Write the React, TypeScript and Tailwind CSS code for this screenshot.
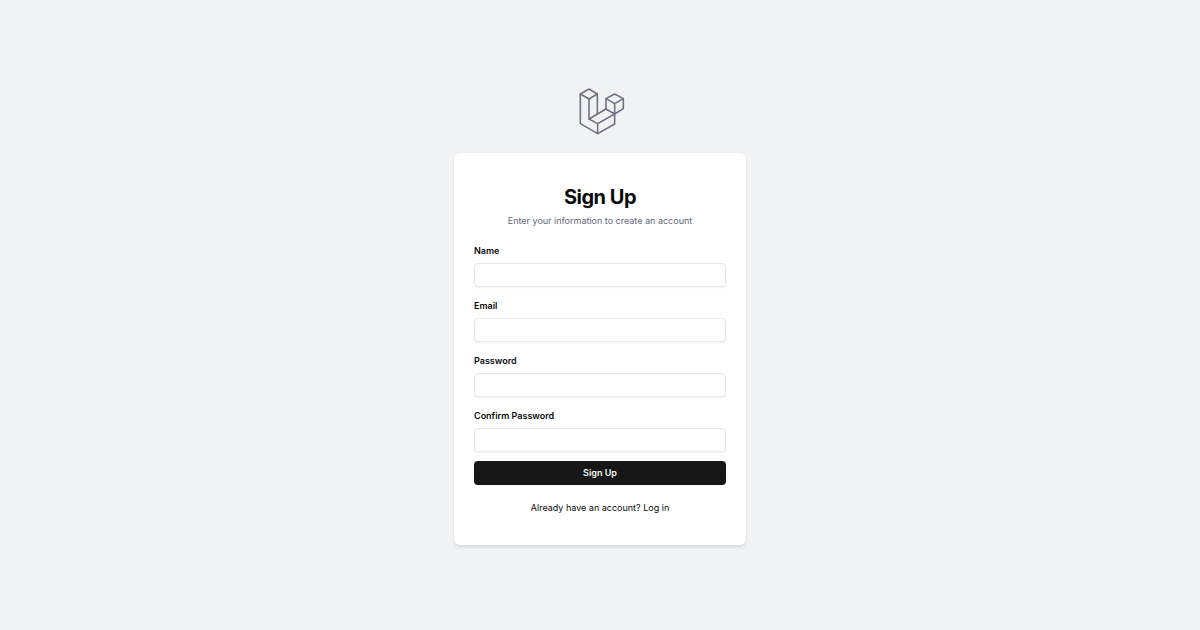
import React from "react";

function Logo() {
  return (
    <svg
      viewBox="28 24 136 141"
      className="h-[47px] w-[46px] text-gray-500"
      fill="none"
      stroke="currentColor"
      strokeWidth="4.7"
      strokeLinejoin="round"
      strokeLinecap="round"
      aria-hidden="true"
    >
      <path d="M57 27 31 42V131L83 161 134 132V102L160 86V56L134 42 108 56V87L57 117V57L82 42Z" />
      <path d="M31 42 57 57M82 42V102M57 117 83 131V161M83 131 134 102V71M108 87 134 102M108 56 134 71 160 56" />
    </svg>
  );
}

type FieldProps = { id: string; label: string; type: string };

function Field({ id, label, type }: FieldProps) {
  return (
    <div className="flex flex-col gap-[5px]">
      <label htmlFor={id} className="text-[9px] leading-[14px] font-semibold">
        {label}
      </label>
      <input
        id={id}
        name={id}
        type={type}
        className="h-6 w-full rounded border border-gray-200 bg-white px-2 text-[9px] shadow-xs outline-none focus:border-gray-400"
      />
    </div>
  );
}

export default function App() {
  return (
    <div className="flex min-h-screen flex-col items-center justify-center bg-[#f0f2f4] font-['Inter',sans-serif] text-neutral-950">
      <a href="#" aria-label="Home" className="mt-0.5 ml-1">
        <Logo />
      </a>
      <main className="mt-[18px] w-full max-w-[292px] rounded-md bg-white px-5 pt-8 pb-[29px] shadow-[0_3px_4px_-1px_rgb(0_0_0/0.1),0_1px_3px_-1px_rgb(0_0_0/0.1)]">
        <header className="text-center">
          <h1 className="text-[20px] leading-6 font-bold tracking-tight">Sign Up</h1>
          <p className="mt-1 text-[9px] leading-4 text-[#5f6775]">
            Enter your information to create an account
          </p>
        </header>
        <form className="mt-[15px]" onSubmit={(event) => event.preventDefault()}>
          <div className="flex flex-col gap-3">
            <Field id="name" label="Name" type="text" />
            <Field id="email" label="Email" type="email" />
            <Field id="password" label="Password" type="password" />
            <Field id="password_confirmation" label="Confirm Password" type="password" />
          </div>
          <button
            type="submit"
            className="mt-[9px] h-6 w-full rounded bg-neutral-900 text-[9px] font-semibold text-neutral-50 shadow-xs hover:bg-neutral-800"
          >
            Sign Up
          </button>
        </form>
        <p className="mt-[15px] text-center text-[9px] leading-4">
          Already have an account? <a href="#">Log in</a>
        </p>
      </main>
    </div>
  );
}
